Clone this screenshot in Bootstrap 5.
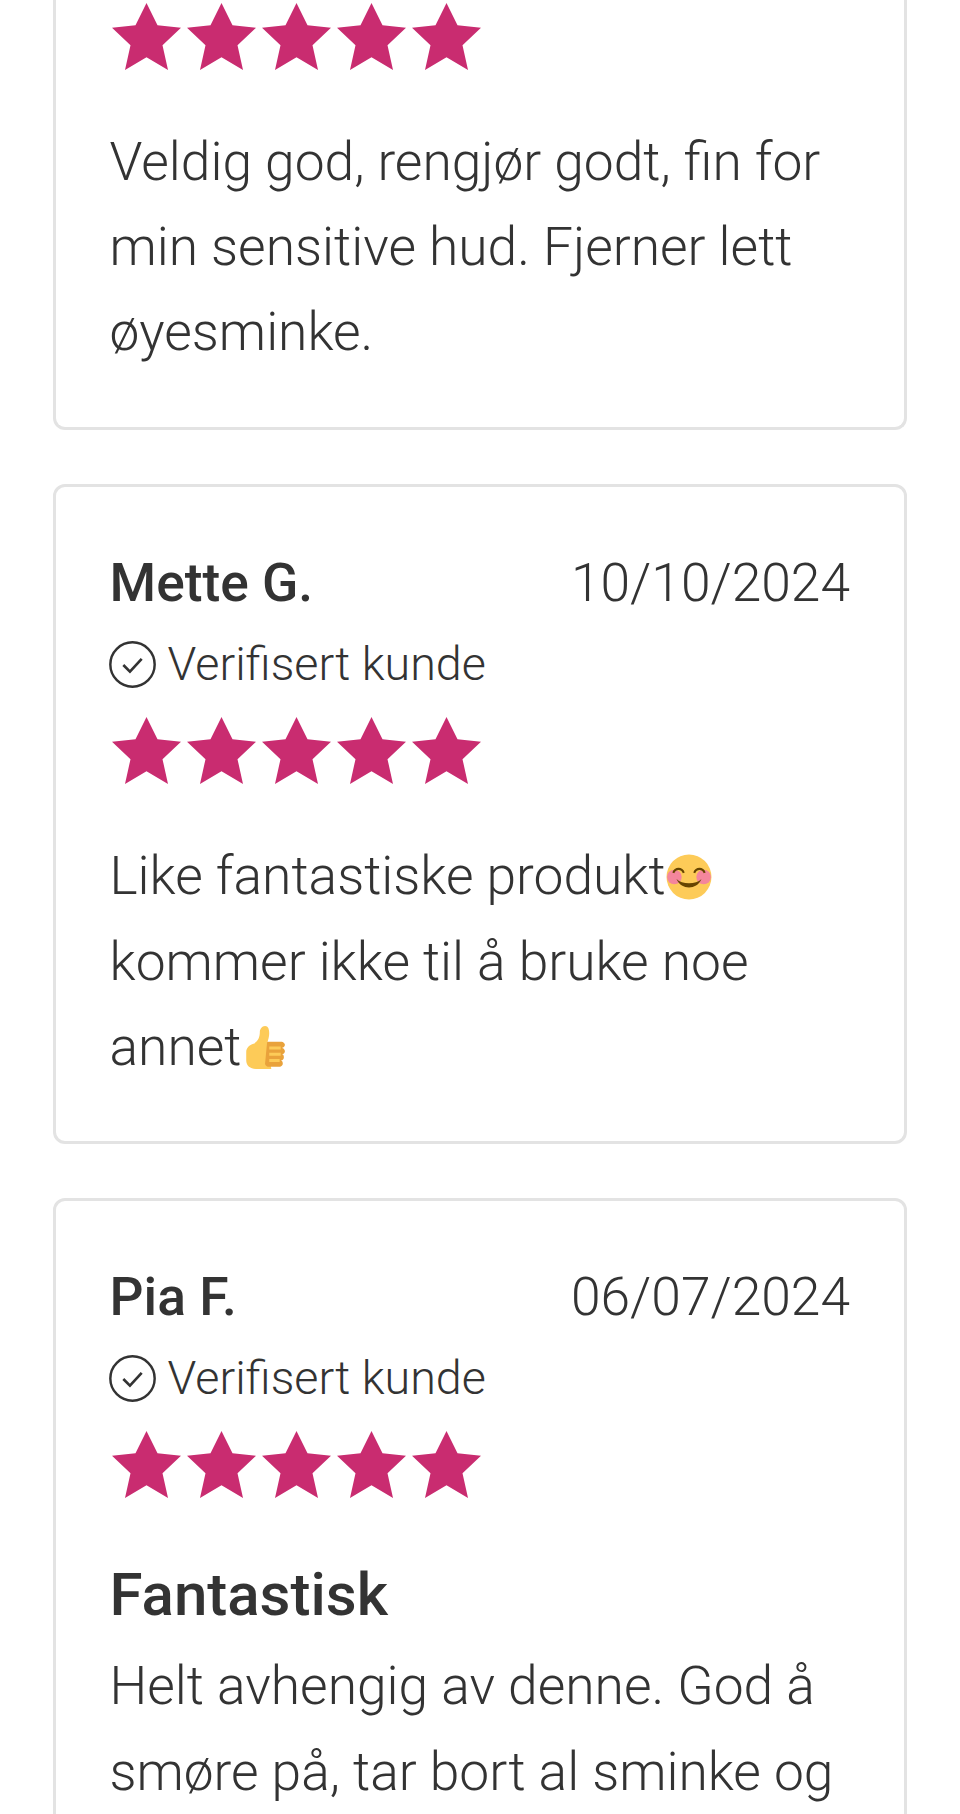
<!DOCTYPE html>
<html lang="no"><head><meta charset="utf-8"><title>Anmeldelser</title>
<link href="https://cdn.jsdelivr.net/npm/bootstrap@5.3.0/dist/css/bootstrap.min.css" rel="stylesheet">
<style>
html,body{background:#fff;margin:0;overflow:hidden}
.page-wrap{height:1814px;overflow:hidden;padding:0 53px;font-family:Roboto,"Liberation Sans",sans-serif;color:#333;font-weight:300}
.rev-card{border:3px solid #e3e3e3;border-radius:12px;padding:54.5px 54px 51px 53.5px;margin-bottom:53.5px;background:#fff}
.rev-card.cut-top{border-top:0;border-top-left-radius:0;border-top-right-radius:0;padding-top:3px;padding-bottom:52px}
.rev-name{font-size:53.33px;font-weight:500;line-height:85.33px}
.rev-date{font-size:53.33px;line-height:85.33px}
.rev-ver{font-size:46.67px;line-height:74.67px;gap:11.5px}
.rev-ver svg{width:47px;height:47px;flex:none;margin-left:-.5px}
.rev-stars{gap:6px;margin-top:15.5px;margin-left:2.5px}
.rev-stars svg{width:69px;height:67px;display:block;flex:none}
.rev-body{font-size:53.33px;line-height:85.33px;margin:0}
.after-stars{margin-top:50.5px}
.cut-top .after-stars{margin-top:49.5px}
.rev-title{font-size:60px;font-weight:500;line-height:72px;margin:61px 0 13.5px}
.emo{width:46px;height:46px;vertical-align:-6px}
</style></head><body>
<svg width="0" height="0" class="d-block"><defs>
<symbol id="star" viewBox="0 0 69 66" preserveAspectRatio="none"><polygon fill="#c92c70" points="34.5,0 45.5,22 69,24.5 50.5,41.5 56,66 34.5,53.5 13,66 18.5,41.5 0,24.5 23.5,22"/></symbol>
<symbol id="ok" viewBox="0 0 46 46"><circle cx="23" cy="23" r="21.7" fill="none" stroke="#333" stroke-width="2.4"/><path d="M14 23.5l6.5 6.5L32 17.5" fill="none" stroke="#333" stroke-width="2.6"/></symbol>
</defs></svg>
<div class="page-wrap">

<div class="rev-card cut-top">
<div class="d-flex rev-stars mt-0"><svg><use href="#star"/></svg><svg><use href="#star"/></svg><svg><use href="#star"/></svg><svg><use href="#star"/></svg><svg><use href="#star"/></svg></div>
<p class="rev-body after-stars">Veldig god, rengjør godt, fin for min sensitive hud. Fjerner lett øyesminke.</p>
</div>

<div class="rev-card">
<div class="d-flex justify-content-between"><div class="rev-name">Mette G.</div><div class="rev-date">10/10/2024</div></div>
<div class="d-flex align-items-center rev-ver"><svg><use href="#ok"/></svg><span>Verifisert kunde</span></div>
<div class="d-flex rev-stars"><svg><use href="#star"/></svg><svg><use href="#star"/></svg><svg><use href="#star"/></svg><svg><use href="#star"/></svg><svg><use href="#star"/></svg></div>
<p class="rev-body after-stars">Like fantastiske produkt<svg class="emo" viewBox="0 0 44 44"><circle cx="22" cy="22" r="21.5" fill="#fdcb58"/><circle cx="8" cy="22" r="7" fill="#f4869c"/><circle cx="36" cy="22" r="7" fill="#f4869c"/><path d="M7 18c2-5 8-5 10 0M27 18c2-5 8-5 10 0" fill="none" stroke="#664500" stroke-width="2"/><path d="M10 24c3 6 7 8 12 8s9-2 12-8c-3 3-7 4-12 4s-9-1-12-4z" fill="#664500"/></svg> kommer ikke til å bruke noe annet<svg class="emo" viewBox="0 0 44 44"><path d="M14 42c-5 0-9-3-9-8v-8c0-4 3-7 7-8 4-2 6-6 6-11 0-3 2-6 5-6s4 3 4 7c0 3-1 7-2 9l4 25z" fill="#fdcb58"/><path d="M25 16h13c3 0 4 2 4 3s-1 3-3 3c2 0 3 2 3 3s-1 3-3 3c2 0 2 2 2 3s-1 3-3 3c1 0 2 1 2 3s-2 3-4 3H27c-2 0-4-1-4-3z" fill="#e9a23b"/><path d="M27 22h11M27 28h11M27 34h10" stroke="#fdcb58" stroke-width="3"/></svg></p>
</div>

<div class="rev-card">
<div class="d-flex justify-content-between"><div class="rev-name">Pia F.</div><div class="rev-date">06/07/2024</div></div>
<div class="d-flex align-items-center rev-ver"><svg><use href="#ok"/></svg><span>Verifisert kunde</span></div>
<div class="d-flex rev-stars"><svg><use href="#star"/></svg><svg><use href="#star"/></svg><svg><use href="#star"/></svg><svg><use href="#star"/></svg><svg><use href="#star"/></svg></div>
<h2 class="rev-title">Fantastisk</h2>
<p class="rev-body">Helt avhengig av denne. God å smøre på, tar bort al sminke og</p>
</div>

</div>
<script src="https://cdn.jsdelivr.net/npm/bootstrap@5.3.0/dist/js/bootstrap.bundle.min.js"></script>
</body></html>
